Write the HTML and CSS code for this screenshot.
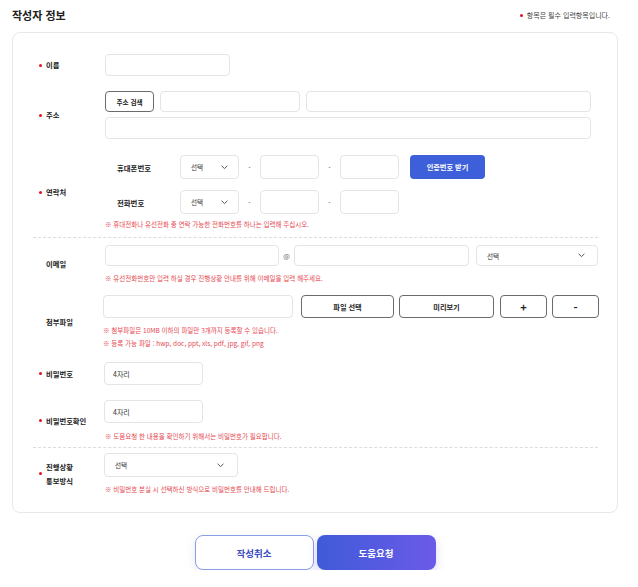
FILE: index.html
```html
<!DOCTYPE html>
<html lang="ko">
<head>
<meta charset="utf-8">
<title>작성자 정보</title>
<link rel="stylesheet" href="styles.css">
</head>
<body>
<div class="page">
  <div class="head">
    <h2 class="title">작성자 정보</h2>
    <p class="head-note req">항목은 필수 입력항목입니다.</p>
  </div>

  <div class="card">
    <div class="row r-name">
      <div class="label req">이름</div>
      <div class="field"><div class="box w-name h22"></div></div>
    </div>

    <div class="row r-addr">
      <div class="label req">주소</div>
      <div class="field">
        <div class="line">
          <div class="btn btn-addr h21">주소 검색</div>
          <div class="box w-zip h21"></div>
          <div class="box w-addr1 h21"></div>
        </div>
        <div class="line gap5">
          <div class="box w-addr2 h22"></div>
        </div>
      </div>
    </div>

    <div class="row r-contact">
      <div class="label req">연락처</div>
      <div class="field">
        <div class="line sub">
          <div class="sublabel">휴대폰번호</div>
          <div class="box select w-sel h24"><span>선택</span><svg width="7" height="5" viewBox="0 0 7 5"><path d="M0.6 0.8 L3.5 3.6 L6.4 0.8" fill="none" stroke="#555" stroke-width="1"/></svg></div>
          <div class="dash">-</div>
          <div class="box w-ph h24"></div>
          <div class="dash">-</div>
          <div class="box w-ph h24"></div>
          <div class="btn-blue h24">인증번호 받기</div>
        </div>
        <div class="line sub gap11">
          <div class="sublabel">전화번호</div>
          <div class="box select w-sel h24"><span>선택</span><svg width="7" height="5" viewBox="0 0 7 5"><path d="M0.6 0.8 L3.5 3.6 L6.4 0.8" fill="none" stroke="#555" stroke-width="1"/></svg></div>
          <div class="dash">-</div>
          <div class="box w-ph h24"></div>
          <div class="dash">-</div>
          <div class="box w-ph h24"></div>
        </div>
        <p class="note n-contact">※ 휴대전화나 유선전화 중 연락 가능한 전화번호를 하나는 입력해 주십시오.</p>
      </div>
    </div>

    <div class="divider d1"></div>

    <div class="row r-email">
      <div class="label">이메일</div>
      <div class="field">
        <div class="line">
          <div class="box w-mail1 h21"></div>
          <div class="at">@</div>
          <div class="box w-mail2 h21"></div>
          <div class="box select w-mailsel h21 ml7"><span>선택</span><svg width="7" height="5" viewBox="0 0 7 5"><path d="M0.6 0.8 L3.5 3.6 L6.4 0.8" fill="none" stroke="#555" stroke-width="1"/></svg></div>
        </div>
        <p class="note n-email">※ 유선전화번호만 입력 하실 경우 진행상황 안내를 위해 이메일을 입력 해주세요.</p>
      </div>
    </div>

    <div class="row r-attach">
      <div class="label">첨부파일</div>
      <div class="field">
        <div class="line">
          <div class="box w-file h23"></div>
          <div class="btn h23 w-b1 ml8">파일 선택</div>
          <div class="btn h23 w-b2 ml5">미리보기</div>
          <div class="btn btn-sign h23 w-b3 ml6">+</div>
          <div class="btn btn-sign h23 w-b3 ml5">-</div>
        </div>
        <p class="note n-attach">※ 첨부파일은 10MB 이하의 파일만 3개까지 등록할 수 있습니다.</p>
        <p class="note n-attach2">※ 등록 가능 파일 : hwp, doc, ppt, xls, pdf, jpg, gif, png</p>
      </div>
    </div>

    <div class="row r-pw">
      <div class="label req">비밀번호</div>
      <div class="field"><div class="box w-pw h23 text">4자리</div></div>
    </div>

    <div class="row r-pw2">
      <div class="label req">비밀번호확인</div>
      <div class="field">
        <div class="box w-pw h23 text">4자리</div>
        <p class="note n-pw">※ 도움요청 한 내용을 확인하기 위해서는 비밀번호가 필요합니다.</p>
      </div>
    </div>

    <div class="divider d2"></div>

    <div class="row r-prog">
      <div class="label req two">진행상황<br>통보방식</div>
      <div class="field">
        <div class="box select w-prog h24"><span>선택</span><svg width="7" height="5" viewBox="0 0 7 5"><path d="M0.6 0.8 L3.5 3.6 L6.4 0.8" fill="none" stroke="#555" stroke-width="1"/></svg></div>
        <p class="note n-prog">※ 비밀번호 분실 시 선택하신 방식으로 비밀번호를 안내해 드립니다.</p>
      </div>
    </div>
  </div>

  <div class="actions">
    <div class="act act-cancel">작성취소</div>
    <div class="act act-submit">도움요청</div>
  </div>
</div>
</body>
</html>
```

FILE: styles.css
```css
* { box-sizing: border-box; }
html, body { margin: 0; padding: 0; background: #fff; }
body {
  font-family: "Noto Sans CJK KR", "Noto Sans", sans-serif;
  color: #222;
}
.page { width: 638px; padding-top: 8px; }

.head {
  display: flex;
  justify-content: space-between;
  align-items: center;
  height: 14px;
  padding: 0 28px 0 12px;
}
.title {
  margin: 0;
  font-size: 11px;
  font-weight: 700;
  line-height: 14px;
  color: #222;
}
.head-note {
  margin: 0;
  font-size: 7px;
  line-height: 10px;
  color: #444;
  display: flex;
  align-items: center;
}

.card {
  margin: 10px 20px 0 12px;
  border: 1px solid #e8e8e8;
  border-radius: 8px;
  padding: 21px 19px 18px 20px;
}

.row {
  display: grid;
  grid-template-columns: 72px 1fr;
  align-items: center;
}
.label {
  display: flex;
  align-items: center;
  padding-left: 13px;
  font-size: 7.3px;
  font-weight: 700;
  line-height: 14px;
  color: #222;
}
.req::before {
  content: "";
  flex: none;
  width: 3px;
  height: 3px;
  border-radius: 50%;
  background: #e60f1e;
  margin-left: -7px;
  margin-right: 4px;
}
.head-note.req::before { margin-left: 0; margin-right: 4px; }
.label.two { line-height: 14px; }

.field { display: flex; flex-direction: column; align-items: flex-start; }
.line { display: flex; align-items: center; }
.gap5 { margin-top: 5px; }
.gap11 { margin-top: 11px; }

.box {
  border: 1px solid #e4e4e4;
  border-radius: 4px;
  background: #fff;
  flex: none;
}
.box.text {
  display: flex;
  align-items: center;
  padding-left: 8px;
  font-size: 7px;
  color: #333;
}
.select {
  display: flex;
  align-items: center;
  justify-content: space-between;
  padding: 0 10px 0 10px;
  font-size: 6.6px;
  color: #333;
}
.select svg { display: block; }

.h21 { height: 21px; }
.h22 { height: 22px; }
.h23 { height: 23px; }
.h24 { height: 24px; }

.w-name { width: 125px; }
.w-zip { width: 140px; margin-left: 6px; }
.w-addr1 { width: 285px; margin-left: 6px; }
.w-addr2 { width: 486px; }
.w-sel { width: 59px; }
.w-ph { width: 59px; }
.w-mail1 { width: 174px; }
.w-mail2 { width: 175px; }
.w-mailsel { width: 122px; padding-right: 12px; }
.w-file { width: 190px; margin-left: -2px; }
.w-b1 { width: 93px; }
.w-b2 { width: 95px; }
.w-b3 { width: 47px; }
.w-pw { width: 99px; margin-left: -1px; }
.w-prog { width: 134px; margin-left: -1px; padding-right: 13px; }
.ml5 { margin-left: 5px; }
.ml6 { margin-left: 6px; }
.ml7 { margin-left: 7px; }
.ml8 { margin-left: 8px; }

.btn {
  display: flex;
  align-items: center;
  justify-content: center;
  flex: none;
  border: 1px solid #6b6b6b;
  border-radius: 4px;
  background: #fff;
  font-size: 7.2px;
  font-weight: 700;
  color: #222;
}
.btn-addr { width: 49px; font-size: 6.6px; }
.btn-sign { font-size: 11px; font-weight: 700; }

.sublabel {
  width: 75px;
  padding-left: 12px;
  font-size: 7.4px;
  font-weight: 700;
  color: #222;
}
.dash {
  width: 21px;
  text-align: center;
  font-size: 7px;
  color: #555;
}
.at {
  width: 15px;
  text-align: center;
  font-size: 7px;
  color: #666;
}
.btn-blue {
  display: flex;
  align-items: center;
  justify-content: center;
  width: 75px;
  margin-left: 11px;
  border-radius: 4px;
  background: #3d5fd9;
  color: #fff;
  font-size: 7.2px;
  font-weight: 700;
}

.note {
  margin: 6px 0 0 0;
  font-size: 6.5px;
  line-height: 10px;
  color: #e6474f;
  white-space: nowrap;
}
.n-contact { margin-top: 5px; }
.n-email { margin-top: 7px; }
.n-attach { margin-top: 7px; margin-left: -2px; }
.n-attach2 { margin-top: 3px; margin-left: -2px; }
.n-pw { margin-top: 8px; }
.n-prog { margin-top: 7px; }

.divider { border-top: 1px dashed #dcdcdc; }
.d1 { margin-top: 8px; }
.d2 { margin-top: 6px; }

.r-addr { margin-top: 15px; }
.r-contact { margin-top: 16px; }
.r-email { margin-top: 7px; }
.r-attach { margin-top: 12px; }
.r-pw { margin-top: 14px; }
.r-pw2 { margin-top: 15px; }
.r-prog { margin-top: 5px; }

.actions {
  display: flex;
  justify-content: center;
  gap: 3px;
  margin: 22px 20px 0 12px;
}
.act {
  display: flex;
  align-items: center;
  justify-content: center;
  width: 119px;
  height: 35px;
  border-radius: 8px;
  font-size: 9.5px;
  font-weight: 700;
}
.act-cancel {
  background: #fff;
  border: 1px solid #8b9de8;
  color: #3b4cc0;
  box-shadow: 0 4px 10px rgba(60, 70, 140, 0.12);
}
.act-submit {
  background: linear-gradient(90deg, #3f5bd8 0%, #6b5ae8 100%);
  color: #fff;
  box-shadow: 0 4px 10px rgba(90, 90, 220, 0.22);
}
```
